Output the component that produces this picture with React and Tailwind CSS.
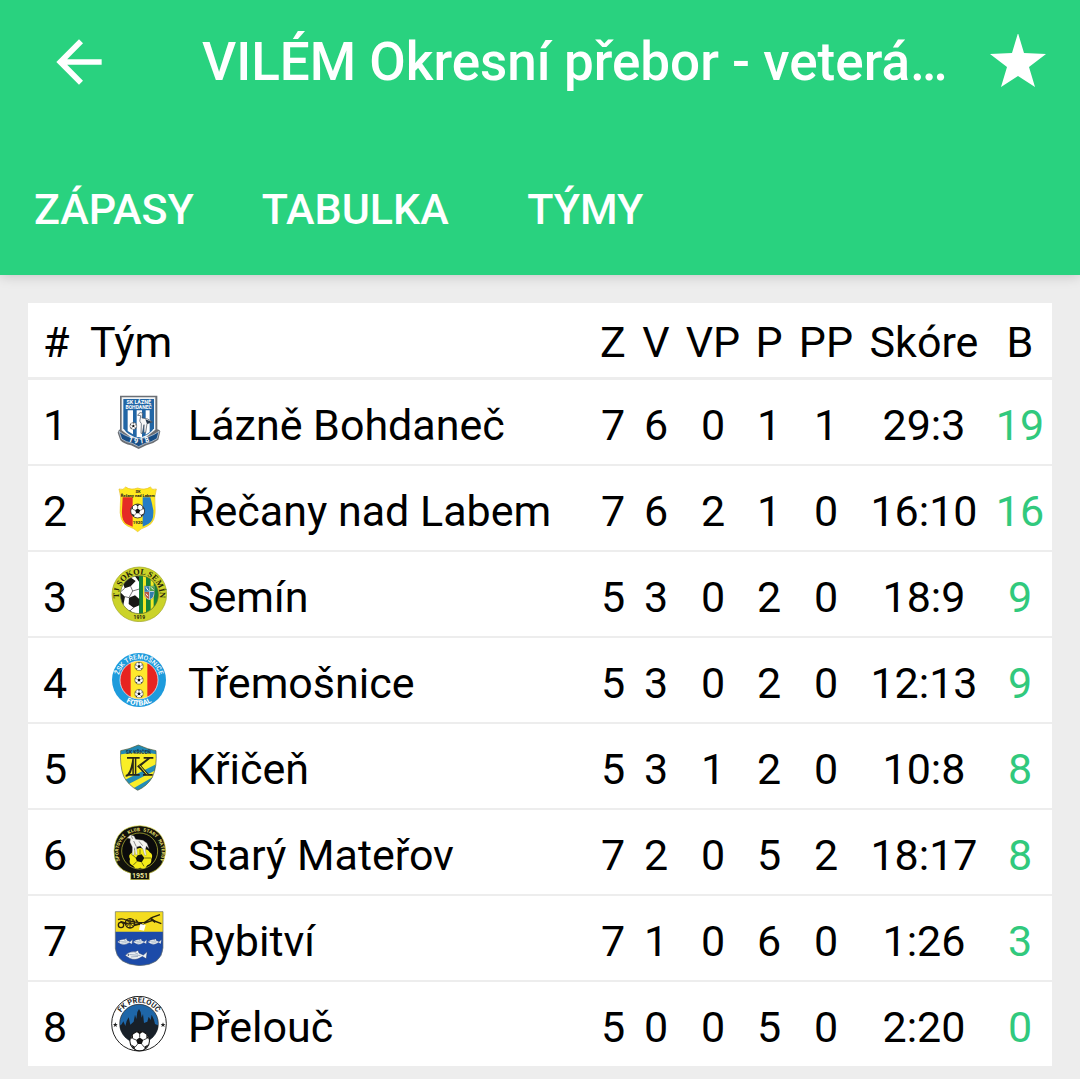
import { useState } from 'react';
import { MdArrowBack } from 'react-icons/md';

// Fotbalový míč, používá se ve více znacích
function Ball({ cx, cy, r }) {
  return (
    <g transform={`translate(${cx} ${cy}) scale(${r / 20})`}>
      <circle r="19" fill="#fff" stroke="#111" strokeWidth="2" />
      <path d="M0-7 7-2 4 6-4 6-7-2Z" fill="#111" />
      <path d="M0-7V-14M7-2 14-5M4 6 9 12M-4 6-9 12M-7-2-14-5" stroke="#111" strokeWidth="1.5" />
      <path d="M-6-18H6L0-13ZM13-13 18-4 13-6ZM18 6 10 16 9 11ZM-10 16-18 6-9 11ZM-18-4-13-13-13-6Z" fill="#111" />
    </g>
  );
}

function BohdanecLogo() {
  return (
    <svg viewBox="33 27 168 168" className="block size-14" aria-hidden="true">
      <path d="M60 32H172V133Q179 134 181 139L175 164Q159 177 139 181L116 192 93 181Q71 177 61 166L53 143Q55 135 60 133Z" fill="#6b6f75" />
      <path d="M65 37H166V134L116 174 65 136Z" fill="#f2f5f7" />
      <path d="M70 42H162V130Q150 150 116 160 82 151 70 130Z" fill="#2266a5" />
      <path d="M83 76H99V148L83 138ZM110 76H126V156H110ZM137 76H149V141L137 149Z" fill="#fff" />
      <path d="M57 139Q84 160 116 160T177 139L171 161Q154 172 136 175L116 185 97 175Q77 171 65 162Z" fill="#174d85" stroke="#d9e1e8" strokeWidth="2" />
      <path d="M117 85Q122 80 128 85L126 99Q145 99 157 111L141 116 137 143H132V119L127 145H123L124 116Q116 109 121 99L122 92 113 91Z" fill="#f8f8f8" stroke="#384656" strokeWidth="2" />
      <path d="M136 103 157 111 141 116Z" fill="#25384c" />
      <Ball cx={100} cy={123} r={11} />
      <text x="116" y="58" textAnchor="middle" fill="#fff" fontSize="16" fontWeight="700">SK LÁZNĚ</text>
      <text x="116" y="73" textAnchor="middle" fill="#fff" fontSize="15" fontWeight="700">BOHDANEČ</text>
      <path id="bohdanec-rok" d="M76 165Q116 186 157 165" fill="none" />
      <text fill="#fff" fontSize="22" fontWeight="700">
        <textPath href="#bohdanec-rok" startOffset="50%" textAnchor="middle">1 9 1 8</textPath>
      </text>
    </svg>
  );
}

function RecanyLogo() {
  return (
    <svg viewBox="33 30 168 168" className="block size-14" aria-hidden="true">
      <path d="M57 57Q70 62 77 51 92 62 113 54 134 62 151 51 157 62 169 57 162 81 165 107 170 157 141 169 123 175 113 185 103 175 83 168 56 155 61 106 65 80 57 57Z" fill="#ffe91e" stroke="#e6bd24" strokeWidth="2" />
      <path d="M68 82H98V170L81 163Q64 154 66 121Z" fill="#e52b25" />
      <path d="M128 82H151Q156 99 160 121 162 154 145 162L128 170Z" fill="#247cc6" />
      <text x="114" y="69" textAnchor="middle" fill="#222" fontSize="12" fontWeight="700">SK</text>
      <text x="113" y="81" textAnchor="middle" fill="#222" fontSize="12" fontWeight="800">Řečany nad Labem</text>
      <Ball cx={113} cy={123} r={22} />
      <text x="113" y="162" textAnchor="middle" fill="#222" fontSize="13" fontWeight="700">1920</text>
    </svg>
  );
}

function SeminLogo() {
  return (
    <svg viewBox="33 33 168 168" className="block size-14" aria-hidden="true">
      <circle cx="118" cy="118" r="82" fill="#cbd329" stroke="#9fa326" strokeWidth="2" />
      <clipPath id="semin-kruh"><circle cx="118" cy="119" r="57" /></clipPath>
      <g clipPath="url(#semin-kruh)">
        <path d="M60 61H118V177H60Z" fill="#fff" />
        <path d="M117 61H177V177H117Z" fill="#168338" />
        <path d="M129 61H138V177H129ZM152 61H161V177H152Z" fill="#f1e929" />
        <path d="M68 82 91 67 107 78 92 94 74 100ZM60 111 75 125 70 150 55 146ZM87 128 105 121 118 132V151L101 158 86 147ZM75 165 91 166 102 180H75ZM104 62 117 64V80Z" fill="#171914" />
        <path d="M92 94 98 108 87 128M98 108 118 102M75 125 87 128M101 158 91 166M74 100 61 111" stroke="#333" strokeWidth="2" fill="none" />
        <path d="M133 93H163V117Q163 130 148 135 133 129 133 116Z" fill="#eee" stroke="#655b31" strokeWidth="1" />
        <path d="M134 94H148V110H134ZM149 110H162Q162 128 149 133Z" fill="#327fae" />
        <path d="M149 94H162V108H149Z" fill="#54a44a" />
        <path d="M134 111H147V132Q134 128 134 111Z" fill="#b75842" />
        <path d="M138 97 145 107M153 97 160 104M138 116 144 124" stroke="#fff" strokeWidth="3" />
      </g>
      <circle cx="118" cy="119" r="57" fill="none" stroke="#5d6825" strokeWidth="2" />
      <path id="semin-nazev" d="M70 157A61 61 0 1 1 166 157" fill="none" />
      <text fill="#24210b" fontSize="25" fontWeight="700" className="font-['Liberation_Serif',serif]">
        <textPath href="#semin-nazev" startOffset="50%" textAnchor="middle">TJ SOKOL SEMÍN</textPath>
      </text>
      <text x="118" y="192" textAnchor="middle" fill="#24210b" fontSize="15" fontWeight="700">1919</text>
    </svg>
  );
}

function TremosniceLogo() {
  return (
    <svg viewBox="33 30 168 168" className="block size-14" aria-hidden="true">
      <circle cx="117" cy="114" r="81" fill="#1e9bdc" />
      <clipPath id="tremosnice-kruh"><circle cx="117" cy="114" r="57" /></clipPath>
      <g clipPath="url(#tremosnice-kruh)">
        <path d="M58 55H176V175H58Z" fill="#e72421" />
        <path d="M92 55H142V175H92Z" fill="#ffe82d" />
        <Ball cx={117} cy={73} r={13} />
        <Ball cx={117} cy={114} r={13} />
        <Ball cx={117} cy={155} r={13} />
      </g>
      <circle cx="117" cy="114" r="57" fill="none" stroke="#fff" strokeWidth="2" />
      <path id="tremosnice-nazev" d="M60 138A62 62 0 1 1 174 138" fill="none" />
      <text fill="#fff" fontSize="20" fontWeight="500">
        <textPath href="#tremosnice-nazev" startOffset="50%" textAnchor="middle">ŽSK TŘEMOŠNICE</textPath>
      </text>
      <path id="tremosnice-fotbal" d="M43 128A75 75 0 0 0 191 128" fill="none" />
      <text fill="#fff" fontSize="22" fontWeight="800">
        <textPath href="#tremosnice-fotbal" startOffset="50%" textAnchor="middle">FOTBAL</textPath>
      </text>
    </svg>
  );
}

function KricenLogo() {
  return (
    <svg viewBox="33 30 168 168" className="block size-14" aria-hidden="true">
      <clipPath id="kricen-stit">
        <path d="M62 68 87 62 115 51 143 62 168 68Q172 116 157 148 142 174 113 187 84 171 71 145 59 113 62 68Z" />
      </clipPath>
      <g clipPath="url(#kricen-stit)">
        <path d="M50 45H180V195H50Z" fill="#f9ee27" />
        <path d="M50 45H180V81Q115 65 50 82Z" fill="#2189b4" />
        <path d="M76 155 172 107V124L79 172ZM98 182 169 141V157L112 191Z" fill="#238db7" />
      </g>
      <path d="M62 68 87 62 115 51 143 62 168 68Q172 116 157 148 142 174 113 187 84 171 71 145 59 113 62 68Z" fill="none" stroke="#4d594c" strokeWidth="2" />
      <text x="115" y="78" textAnchor="middle" fill="#17374a" fontSize="15" fontWeight="800">SK KŘIČEŇ</text>
      <path d="M81 87H119V92H109V138H119V143H87V138H97V120Q91 147 77 146V141Q91 137 97 92H81ZM111 115 141 92H131V87H160V92H150L124 113 146 138H158V143H129V138H134Z" fill="#282719" />
      <path d="M103 92V138M119 113 141 139" stroke="#f9ee27" strokeWidth="3" />
    </svg>
  );
}

function MaterovLogo() {
  return (
    <svg viewBox="33 36 168 168" className="block size-14" aria-hidden="true">
      <path d="M92 184Q41 170 42 116 46 43 120 41 193 46 197 116 194 169 148 184V203H92Z" fill="#11120c" stroke="#d8d640" strokeWidth="2" />
      <circle cx="119" cy="117" r="54" fill="#0b0b0b" stroke="#c6c63b" strokeWidth="2" />
      <path d="M107 113Q119 104 130 112 143 109 149 121 161 128 154 141 156 155 142 160 135 175 121 167 107 174 99 161 85 156 90 141 83 128 96 122 98 113 107 113Z" fill="#f4ec18" />
      <path d="M113 130 125 127 133 138 125 151 111 148 107 139Z" fill="#11120b" />
      <path d="M120 112V128M153 138H133M132 163 125 151M100 159 111 148M94 126 108 138" stroke="#75720e" strokeWidth="3" />
      <path d="M82 78 91 69 102 72 107 82 129 85 141 94 147 110 139 102 136 114 139 130 134 130 129 112 121 102 110 105 112 128 107 128 104 107 102 129 97 129 97 105 90 91 91 80Z" fill="#f4f4f0" stroke="#777" strokeWidth="1" />
      <path d="M101 87 109 104M117 88 128 101M94 73 98 80" stroke="#555" strokeWidth="2" />
      <path id="materov-nazev" d="M74 168A65 65 0 1 1 166 168" fill="none" />
      <text fill="#e1dc69" fontSize="15" fontWeight="700" className="font-['Liberation_Mono',monospace]">
        <textPath href="#materov-nazev" startOffset="50%" textAnchor="middle">SPORTOVNÍ KLUB STARÝ MATEŘOV</textPath>
      </text>
      <text x="120" y="198" textAnchor="middle" fill="#eee99b" fontSize="21" fontWeight="700">1951</text>
    </svg>
  );
}

function Fish({ x, y, scale = 1 }) {
  return (
    <g transform={`translate(${x} ${y}) scale(${scale})`}>
      <path d="M0 1Q9-9 22-7L27-10 29-4 38 0 46-7 44 8 36 3Q22 13 10 7Z" fill="#edf1f4" stroke="#172d65" strokeWidth="1" />
      <path d="M9-1 32 1M12 4 27 3M20-5 27-2" stroke="#8597ae" strokeWidth="1.5" />
      <circle cx="7" cy="0" r="1.5" fill="#152950" />
    </g>
  );
}

function RybitviLogo() {
  return (
    <svg viewBox="33 36 168 168" className="block size-14" aria-hidden="true">
      <path d="M46 41H189V103H46Z" fill="#f4dc20" />
      <path d="M46 101H189V150Q185 201 118 203 50 199 46 151Z" fill="#1c4ba9" />
      <path d="M46 41H189V150Q185 201 118 203 50 199 46 151Z" fill="none" stroke="#666e66" strokeWidth="2" />
      <g stroke="#29220c" fill="none" strokeWidth="4">
        <circle cx="90" cy="76" r="14" />
        <circle cx="63" cy="81" r="8" />
        <path d="M90 62V90M76 76H104M80 66 100 86M80 86 100 66" strokeWidth="3" />
        <path d="M54 65Q66 59 80 67L104 72 133 74 157 58 180 50M132 76 158 67 184 77M107 65 118 78 132 81" />
        <path d="M61 71 83 78M101 82 126 76M151 60 166 73" strokeWidth="6" />
      </g>
      <path d="M121 78 137 81 132 98 117 95Z" fill="#fff" />
      <Fish x={52} y={131} />
      <Fish x={99} y={131} scale={0.9} />
      <Fish x={143} y={131} scale={0.9} />
      <Fish x={75} y={171} scale={1.45} />
    </svg>
  );
}

function PreloucLogo() {
  return (
    <svg viewBox="33 36 168 168" className="block size-14" aria-hidden="true">
      <circle cx="117" cy="119" r="82" fill="#fff" stroke="#222" strokeWidth="3" />
      <clipPath id="prelouc-kruh"><circle cx="117" cy="119" r="58" /></clipPath>
      <g clipPath="url(#prelouc-kruh)">
        <path d="M58 60H176V178H58Z" fill="#1e66a8" />
        <path d="M57 127 65 121 70 112 76 126 80 111 86 100 91 122 101 113 105 92 109 105 112 84 117 75 122 84 125 101 129 90 132 117 142 113 146 98 152 108 155 92 162 108 165 120 178 126V179H57Z" fill="#182029" />
      </g>
      <circle cx="117" cy="119" r="58" fill="none" stroke="#222" strokeWidth="2" />
      <path id="prelouc-nazev" d="M54 119A63 63 0 0 1 180 119" fill="none" />
      <text fill="#17191c" fontSize="22" fontWeight="700">
        <textPath href="#prelouc-nazev" startOffset="50%" textAnchor="middle">FK PŘELOUČ</textPath>
      </text>
      <path d="M46 115 48 120 53 120 49 124 51 129 46 126 41 129 43 124 39 120 44 120ZM189 115 191 120 196 120 192 124 194 129 189 126 184 129 186 124 182 120 187 120Z" fill="#222" />
      <Ball cx={119} cy={171} r={31} />
    </svg>
  );
}

const tabs = ['Zápasy', 'Tabulka', 'Týmy'];

const teams = [
  { name: 'Lázně Bohdaneč', Logo: BohdanecLogo, stats: [7, 6, 0, 1, 1], score: '29:3', points: 19 },
  { name: 'Řečany nad Labem', Logo: RecanyLogo, stats: [7, 6, 2, 1, 0], score: '16:10', points: 16 },
  { name: 'Semín', Logo: SeminLogo, stats: [5, 3, 0, 2, 0], score: '18:9', points: 9 },
  { name: 'Třemošnice', Logo: TremosniceLogo, stats: [5, 3, 0, 2, 0], score: '12:13', points: 9 },
  { name: 'Křičeň', Logo: KricenLogo, stats: [5, 3, 1, 2, 0], score: '10:8', points: 8 },
  { name: 'Starý Mateřov', Logo: MaterovLogo, stats: [7, 2, 0, 5, 2], score: '18:17', points: 8 },
  { name: 'Rybitví', Logo: RybitviLogo, stats: [7, 1, 0, 6, 0], score: '1:26', points: 3 },
  { name: 'Přelouč', Logo: PreloucLogo, stats: [5, 0, 0, 5, 0], score: '2:20', points: 0 },
];

export default function App() {
  const [favourite, setFavourite] = useState(true);
  const [activeTab, setActiveTab] = useState('Tabulka');

  return (
    <div className="min-h-screen bg-[#ededed] font-[Roboto,sans-serif] text-black">
      <header className="relative bg-[#29d27f] text-white shadow-[0_1px_12px_rgba(0,0,0,0.18)]">
        <div className="flex h-[124px] items-center pr-[34px] pl-[45px]">
          <button type="button" aria-label="Zpět" className="shrink-0">
            <MdArrowBack className="size-[68px]" />
          </button>
          <h1 className="ml-[89px] min-w-0 flex-1 truncate text-[53px] leading-[72px] font-medium">
            VILÉM Okresní přebor - veterá…
          </h1>
          <button
            type="button"
            aria-label="Oblíbené"
            aria-pressed={favourite}
            onClick={() => setFavourite(!favourite)}
            className="shrink-0"
          >
            <svg viewBox="0 1 56 56" className="size-14">
              <path d="M28 0 34 20 56 21 39 34 45 54 28 43 11 54 17 34 0 21 22 20Z" fill="currentColor" />
            </svg>
          </button>
        </div>

        <nav className="mt-[19px] flex h-[132px]">
          {tabs.map((tab) => (
            <button
              key={tab}
              type="button"
              aria-pressed={activeTab === tab}
              onClick={() => setActiveTab(tab)}
              className="min-w-[205px] px-[34px] text-[43px] font-medium uppercase"
            >
              {tab}
            </button>
          ))}
        </nav>
      </header>

      <main className="p-7 pb-3">
        <table className="w-full table-fixed border-separate border-spacing-0 bg-white text-center text-[43px] leading-[52px]">
          <colgroup>
            <col className="w-[62px]" />
            <col className="w-[98px]" />
            <col />
            <col className="w-[38px]" />
            <col className="w-12" />
            <col className="w-[66px]" />
            <col className="w-[46px]" />
            <col className="w-[68px]" />
            <col className="w-32" />
            <col className="w-16" />
          </colgroup>
          <thead>
            <tr className="h-[77px] *:border-b-3 *:border-[#ededed] *:p-0 *:pt-1 *:font-normal">
              <th scope="col"><div className="pl-[15px] text-left">#</div></th>
              <th scope="col" colSpan={2} className="text-left">Tým</th>
              <th scope="col">Z</th>
              <th scope="col">V</th>
              <th scope="col">VP</th>
              <th scope="col">P</th>
              <th scope="col">PP</th>
              <th scope="col">Skóre</th>
              <th scope="col">B</th>
            </tr>
          </thead>
          <tbody>
            {teams.map(({ name, Logo, stats, score, points }, index) => (
              <tr
                key={name}
                className="h-[86px] *:border-b-2 *:border-[#ededed] *:p-0 last:h-[84px] last:*:border-b-0"
              >
                <td><div className="pt-1.5 pl-[15px] text-left">{index + 1}</div></td>
                <td><div className="flex justify-center"><Logo /></div></td>
                <td><div className="truncate pt-1.5 text-left">{name}</div></td>
                {stats.map((value, i) => (
                  <td key={i}><div className="pt-1.5">{value}</div></td>
                ))}
                <td><div className="pt-1.5">{score}</div></td>
                <td><div className="pt-1.5 text-[#31c97d]">{points}</div></td>
              </tr>
            ))}
          </tbody>
        </table>
      </main>
    </div>
  );
}
